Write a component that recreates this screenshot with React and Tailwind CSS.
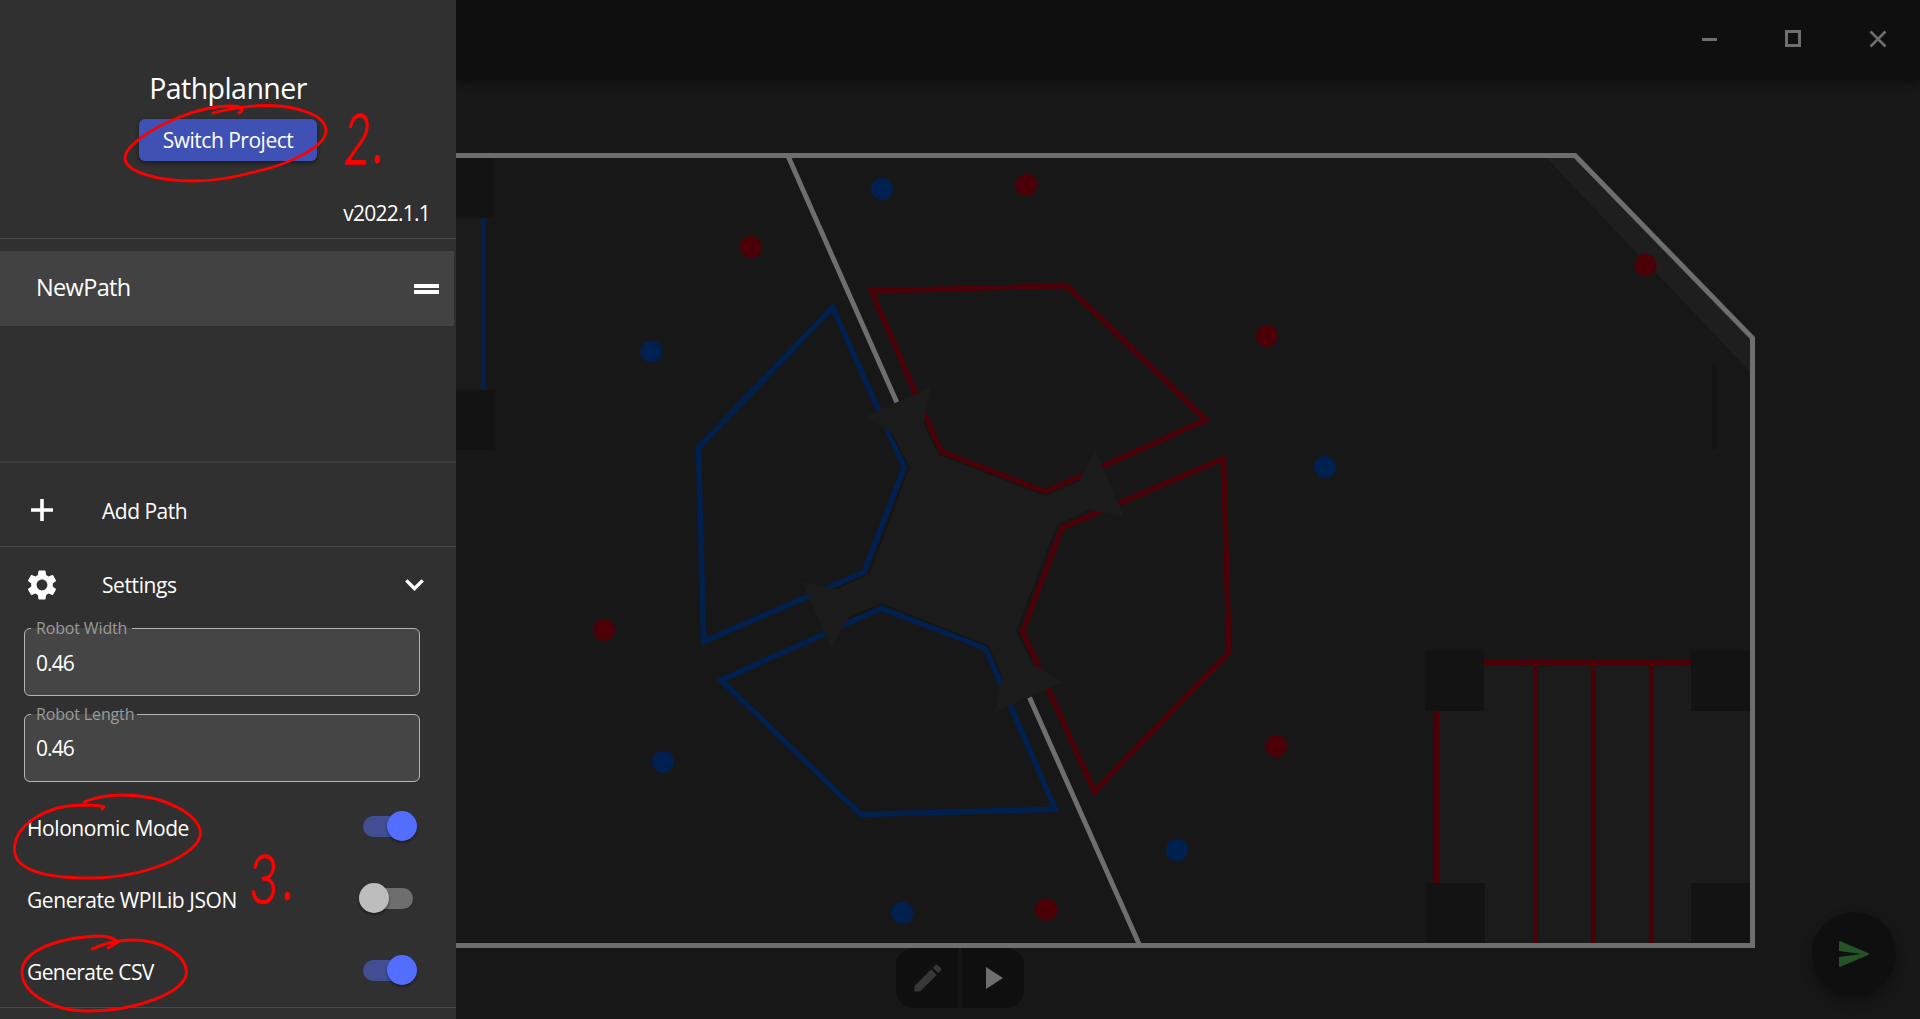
import React from 'react';
import { MdSettings, MdEdit } from 'react-icons/md';

const BLUE = '#00204f';
const RED = '#4a0006';
const WALL = '#6e6e6e';

const blueCargo = [[882, 189], [651.5, 351.5], [1325, 467], [663, 762], [1177, 850], [902.3, 913]];
const redCargo = [[751, 247], [1026.3, 185], [1267, 336], [1645.5, 265], [604, 630], [1276.5, 746], [1046.3, 909.5]];

const hub =
  '863.6,417.3 931,387.3 924,422.3 939.3,454.3 1045.4,495.3 1079.3,480 1095.4,450 1124.6,518 1090.7,509.7 1057.5,525.7 1016.8,631.3 1034.3,665 1063,682.3 995.4,711.7 1002,676.7 988,646 881.4,604 848,618.3 831.4,648.3 802,581.7 835.4,589 869.3,573.3 908.6,467.3 890.7,431.7';

function Field() {
  return (
    <svg className="block h-full w-full" viewBox="456 82 1464 937" fill="none">
      <path d="M1546.5 158H1575L1752 338V373.5Z" fill="#1e1e1e" />
      <rect x="1712" y="364" width="5" height="86" fill="#141414" />

      <rect x="456" y="218" width="25" height="172" fill="#1b1b1b" />
      <rect x="456" y="158" width="38" height="60" fill="#131313" />
      <rect x="456" y="390" width="39" height="60" fill="#131313" />
      <rect x="481" y="218" width="5" height="172" fill={BLUE} />

      <rect x="1439" y="665" width="311" height="278" fill="#1b1b1b" />
      <g fill={RED}>
        <rect x="1484" y="660" width="207" height="5.5" />
        <rect x="1434" y="711" width="5" height="172" />
        <rect x="1533" y="665" width="5" height="278" />
        <rect x="1591" y="665" width="5" height="278" />
        <rect x="1649" y="665" width="5" height="278" />
      </g>
      <g fill="#131313">
        <rect x="1425" y="651" width="59" height="60" />
        <rect x="1691" y="651" width="59" height="60" />
        <rect x="1426" y="883" width="59" height="60" />
        <rect x="1691" y="883" width="59" height="60" />
      </g>

      <g stroke={RED} strokeWidth="5.4">
        <polygon points="871.5,291 1067,285.8 1206,420 1045.4,492 941,451.7" />
        <polygon points="1223.5,458.5 1229,652.3 1094.3,791.5 1022.5,631.3 1062,527.7" />
      </g>
      <g stroke={BLUE} strokeWidth="5.4">
        <polygon points="832.7,307.5 698.5,447.5 703.7,641.5 864,572.3 904.4,467.3" />
        <polygon points="721,680.3 881.4,608.3 985.7,648.3 1055.3,809.3 861,814.5" />
      </g>
      <polygon points={hub} fill="#1b1b1b" />
      <g stroke="#151515" strokeWidth="1.5">
        <path d="M924 422.3L939.3 454.3L1045.4 495.3L1079.3 480" />
        <path d="M1090.7 509.7L1057.5 525.7L1016.8 631.3L1034.3 665" />
        <path d="M1002 676.7L988 646L881.4 604L848 618.3" />
        <path d="M835.4 589L869.3 573.3L908.6 467.3L890.7 431.7" />
      </g>

      <g stroke={WALL} strokeWidth="4.9">
        <path d="M788 156L896.8 402.3" />
        <path d="M1029.5 697.5L1139.5 945" />
      </g>
      <path d="M456 155.5H1575L1752.5 338V945.5H456" stroke={WALL} strokeWidth="5" />

      {blueCargo.map(([x, y]) => (
        <circle key={`${x}-${y}`} cx={x} cy={y} r="11" fill={BLUE} />
      ))}
      {redCargo.map(([x, y]) => (
        <circle key={`${x}-${y}`} cx={x} cy={y} r="11" fill={RED} />
      ))}
    </svg>
  );
}

function Titlebar() {
  return (
    <header className="z-10 flex h-[80px] shrink-0 items-start justify-end bg-[#0f0f0f] pt-[30px] pr-[33px] shadow-[0_2px_8px_rgba(0,0,0,0.45)]">
      <svg className="mr-[68px] h-[18px] w-[15px]" viewBox="0 0 15 18">
        <rect y="8" width="15" height="3" fill={WALL} />
      </svg>
      <svg className="mr-[68px] h-[18px] w-[16px]" viewBox="0 0 16 18" fill="none">
        <rect x="1.5" y="1.5" width="13" height="14" stroke={WALL} strokeWidth="3" />
      </svg>
      <svg className="h-[18px] w-[18px]" viewBox="0 0 18 18" fill="none">
        <path d="M1.5 1.5L16.5 16.5M16.5 1.5L1.5 16.5" stroke={WALL} strokeWidth="2.6" />
      </svg>
    </header>
  );
}

function NumberField({ label, value, labelClass, spacing }) {
  return (
    <fieldset className={`relative ml-6 h-[68px] w-[396px] rounded-[6px] border border-[#b4b4b4] bg-[#454545] ${spacing}`}>
      <div className={`absolute -top-[1px] left-[6px] h-[1px] bg-[#454545] ${labelClass}`} />
      <span className="absolute -top-[12px] left-[11px] text-[16px] leading-[22px] tracking-[-0.15px] whitespace-nowrap text-[#9b9b9b]">{label}</span>
      <div className="pt-[18.5px] pl-[11px] text-[21px] leading-[30px] tracking-[-0.9px]">{value}</div>
    </fieldset>
  );
}

function Toggle({ on }) {
  return on ? (
    <div className="mr-[39px] flex h-[30px] w-[54px] items-center">
      <div className="flex h-[21px] w-[54px] items-center justify-end rounded-full bg-[#424e94]">
        <div className="h-[30px] w-[30px] shrink-0 rounded-full bg-[#536dfe] shadow-[0_2px_3px_rgba(0,0,0,0.4)]" />
      </div>
    </div>
  ) : (
    <div className="mr-[43px] flex h-[30px] w-[54px] items-center">
      <div className="flex h-[21px] w-[54px] items-center rounded-full bg-[#6e6e6e]">
        <div className="h-[30px] w-[30px] shrink-0 rounded-full bg-[#bdbdbd] shadow-[0_2px_3px_rgba(0,0,0,0.4)]" />
      </div>
    </div>
  );
}

function SwitchRow({ label, on, tracking }) {
  return (
    <div className="flex h-[72px] items-center justify-between pl-[27px]">
      <span className={`pt-[3px] text-[21px] leading-[30px] whitespace-nowrap ${tracking}`}>{label}</span>
      <Toggle on={on} />
    </div>
  );
}

function Annotations() {
  return (
    <svg className="pointer-events-none absolute top-0 left-0 h-[1019px] w-[456px]" viewBox="0 0 456 1019" fill="none">
      <g stroke="#ff0000" strokeWidth="2.8" strokeLinecap="round" strokeLinejoin="round">
        <path d="M213 113C232 108 250 105.5 267 105.5C300 106 326 116 326 131C326 146 290 165 250 173C228 179 210 181 193 181C155 181 125 171 125 158C125 146 152 128 180 117C200 109 215 106 230 106C240 106 247 108 239 113" />
        <path d="M84 802C96 797 108 795 122 795C165 795 200 815 200.5 833C200 855 145 878 88 878C40 878 14 868 14.5 849C15 825 45 806 80 805C90 805 100 805 104 807L102 809" />
        <path d="M92 949C105 943 119 940 133 940C163 940 186 956 186.5 972C186 993 135 1011 88 1011C50 1011 22 992 22 972C22 950 60 937 99 936C107 936 114 938 118 942L108 948" />
      </g>
      <g fill="#ff0000" fontFamily="Lato, sans-serif" fontSize="70">
        <text transform="translate(343 164) skewX(-5) scale(0.63 1)" fontWeight="300" stroke="#ff0000" strokeWidth="1.5">2</text>
        <text transform="translate(372 163) scale(0.65 1)">.</text>
        <text transform="translate(249 902.5) skewX(-2) scale(0.7 0.96)" fontWeight="300" stroke="#ff0000" strokeWidth="1.5">3</text>
        <text transform="translate(282 900) scale(0.65 1)">.</text>
      </g>
    </svg>
  );
}

function Sidebar() {
  return (
    <aside className="relative z-20 flex h-full w-[456px] shrink-0 flex-col overflow-hidden bg-[#303030] text-white">
      <div className="flex h-[238px] shrink-0 flex-col items-center pt-[67px]">
        <h1 className="text-[28.5px] leading-[42px] tracking-[-0.55px]">Pathplanner</h1>
        <button className="mt-[10px] h-[42px] w-[178px] rounded-[6px] bg-[#3f51b5] text-[21px] leading-[40px] tracking-[-0.5px] whitespace-nowrap shadow-[0_2px_4px_rgba(0,0,0,0.45)]">Switch Project</button>
        <div className="mt-[37px] self-end pr-[26px] text-[21px] leading-[30px] tracking-[-0.75px]">v2022.1.1</div>
      </div>
      <div className="h-px shrink-0 bg-[#494949]" />
      <div className="mt-3 flex h-[75px] w-[454px] shrink-0 items-center justify-between bg-[#424242] pr-[15px] pl-[36px]">
        <span className="pb-[3px] text-[23.5px] leading-[34px] tracking-[-0.65px]">NewPath</span>
        <div className="mt-[1px] flex flex-col gap-[2px]">
          <div className="h-1 w-[25px] bg-white" />
          <div className="h-1 w-[25px] bg-white" />
        </div>
      </div>
      <div className="mt-[135px] h-[2px] shrink-0 bg-[#3d3d3d]" />
      <div className="flex h-[83px] shrink-0 items-center pt-[10px] pl-[31px]">
        <svg className="h-[22px] w-[22px]" viewBox="0 0 22 22" stroke="#fff" strokeWidth="3.6">
          <path d="M11 0V22M0 11H22" />
        </svg>
        <span className="pt-[2px] pl-[49px] text-[21px] leading-[30px] tracking-[-0.5px]">Add Path</span>
      </div>
      <div className="h-[1px] shrink-0 bg-[#4a4a4a]" />
      <div className="flex h-[75px] shrink-0 items-center pl-6">
        <MdSettings className="h-9 w-9" />
        <span className="pl-[42px] text-[21px] leading-[30px] tracking-[-0.4px]">Settings</span>
        <svg className="mr-[32px] ml-auto h-[12px] w-[19px]" viewBox="0 0 19 12" fill="none" stroke="#fff" strokeWidth="3.4">
          <path d="M1.3 1.4L9.5 9.5L17.7 1.4" />
        </svg>
      </div>
      <div className="flex shrink-0 flex-col pt-[6px]">
        <NumberField label="Robot Width" value="0.46" labelClass="w-[101px]" spacing="" />
        <NumberField label="Robot Length" value="0.46" labelClass="w-[106px]" spacing="mt-[17.5px]" />
      </div>
      <div className="flex shrink-0 flex-col pt-[8.5px] pb-[1px]">
        <SwitchRow label="Holonomic Mode" on tracking="tracking-[-0.43px]" />
        <SwitchRow label="Generate WPILib JSON" on={false} tracking="tracking-[-0.43px]" />
        <SwitchRow label="Generate CSV" on tracking="tracking-[-0.6px]" />
      </div>
      <div className="h-px shrink-0 bg-[#494949]" />
      <Annotations />
    </aside>
  );
}

export default function App() {
  return (
    <div className="flex h-[1019px] w-[1920px] overflow-hidden bg-[#171717] font-['Open_Sans',sans-serif]">
      <Sidebar />
      <main className="flex min-w-0 flex-1 flex-col">
        <Titlebar />
        <section className="relative mt-[2px] min-h-0 flex-1">
          <Field />
          <div className="absolute bottom-[11px] left-[440px] flex h-[60px] w-[128px] gap-[2px] overflow-hidden rounded-[18px]">
            <button className="flex flex-1 items-center justify-center bg-[#0f0f0f]">
              <MdEdit className="h-9 w-9 text-[#373737]" />
            </button>
            <button className="flex flex-1 items-center justify-center bg-[#0f0f0f]">
              <svg className="ml-[4px] h-[22px] w-[17px]" viewBox="0 0 17 22">
                <path d="M0 0V22L17 11Z" fill={WALL} />
              </svg>
            </button>
          </div>
          <button className="absolute right-[24px] bottom-[23px] flex h-[84px] w-[84px] items-center justify-center rounded-full bg-[#0f0f0f] shadow-[0_6px_12px_rgba(0,0,0,0.3)]">
            <svg className="h-[26px] w-[30px]" viewBox="0 0 30 26">
              <path d="M0 1.2Q0 -0.3 1.5 0.2L29 12Q31 13 29 14L1.5 25.8Q0 26.3 0 24.8V16L22 13L0 10Z" fill="#255226" />
            </svg>
          </button>
        </section>
      </main>
    </div>
  );
}
